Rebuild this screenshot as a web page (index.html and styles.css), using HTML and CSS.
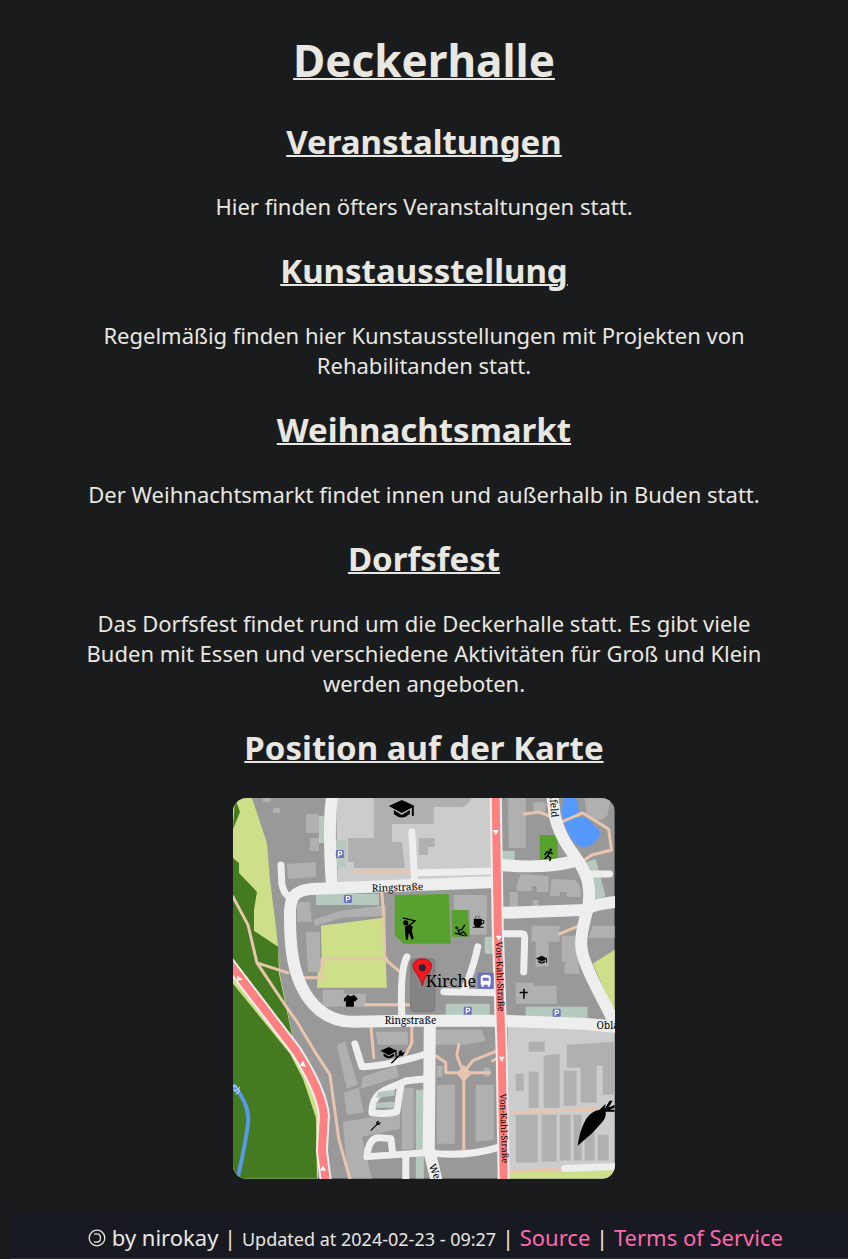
FILE: index.html
```html
<!DOCTYPE html>
<html lang="de">
<head>
<meta charset="utf-8">
<meta name="viewport" content="width=device-width, initial-scale=1">
<title>Deckerhalle</title>
<link rel="stylesheet" href="styles.css">
</head>
<body>
<main class="content">
<h1>Deckerhalle</h1>
<h2>Veranstaltungen</h2>
<p>Hier finden öfters Veranstaltungen statt.</p>
<h2>Kunstausstellung</h2>
<p>Regelmäßig finden hier Kunstausstellungen mit Projekten von Rehabilitanden statt.</p>
<h2>Weihnachtsmarkt</h2>
<p>Der Weihnachtsmarkt findet innen und außerhalb in Buden statt.</p>
<h2>Dorfsfest</h2>
<p>Das Dorfsfest findet rund um die Deckerhalle statt. Es gibt viele Buden mit Essen und verschiedene Aktivitäten für Groß und Klein werden angeboten.</p>
<h2>Position auf der Karte</h2>
<svg class="map" viewBox="233 798 382 381" role="img" aria-label="Karte">
<defs>
<g id="parking"><rect x="-4" y="-4" width="8" height="8" rx="1" fill="#6c70c4"/><path d="M-1.4 2.8V-2.4H.5a1.5 1.5 0 0 1 0 3H-1.4" fill="none" stroke="#fff" stroke-width="1.2"/></g>
<path id="cap" d="M-13-3 0-9 13-3 0 4ZM-8 1 0 6 8 1V5Q0 12-8 5ZM10-2H12V7H10Z"/>
<path id="wrench" d="M-6 6 2-2V-5L5-7V-4L8-5 6-1H3L-5 7Z"/>
<path id="down" d="M-3-2H3L0 3Z" fill="#fff"/>
</defs>
<rect x="233" y="798" width="382" height="381" fill="#999"/>
<path class="meadow" d="M233 798H252L267 843 270 880 276 927 278 947 280 975 293 1038 310 1075 320 1110 318 1179H233Z"/>
<path class="forest" d="M235 798 240 812 233 829ZM233 858 239 863V873L257 892 254 910V931L278 947 279 974 292 1035 290 1044 233 966ZM233 984 290 1054 303 1079 316 1118 317 1179H233Z"/>
<path class="light" d="M336 798H493V885L338 886ZM508 1026 615 1031V1179H509Z"/>
<path class="meadow" d="M321 926 384 918 386 962 387 988H317L318 970 322 967ZM593 964 615 950V1012ZM509 1173 615 1170V1179H509Z"/>
<path class="lot" d="M319 816H324V843H319ZM335 840H346V867H335ZM316 894H379V905H316ZM502 851H515V862H502ZM485 937H494V954H485ZM446 1004H490V1017H446ZM526 1007H588V1018H526ZM587 862 596 859 606 896 596 901ZM416 1090H424V1179H416Z"/>
<path class="park" d="M395 895 449 894 451 944H404L395 936ZM452 910H468L470 937H452ZM540 835H558V861H540Z"/>
<path class="building" d="M263 798H271V802H263ZM273 808H280V813H273ZM306 814H319V833H306ZM310 838H319V851H310ZM287 864 316 862V877L288 879ZM297 902H310L312 922H297ZM314 920 340 911 386 905V916L342 918 315 926ZM306 932H320V972H308ZM323 990H344V994H366V1007H323ZM374 798H472Q468 806 462 807H434V824H392V842H402L405 868H354V862H348V838H374ZM419 838H435V847H428V855H419ZM454 895H487V935H470V910H454ZM508 798H526V848H509ZM533 803Q541 800 547 804L545 812 534 811ZM585 798H611L608 815Q596 826 587 814ZM517 885 521 874 549 876V892H537V886H532V891H517ZM552 879 576 880 581 888V897H567V892H560V896H550ZM510 892H518V907H510ZM533 900H539V907H533ZM532 926H560V942H549V967H536V942H532ZM562 936H576L580 974H565V962H562ZM516 983H534V986H557V1004H516ZM376 1032H408V1045H378ZM435 1030H482L486 1041 466 1045H435ZM337 1046 345 1041 358 1085 347 1089ZM344 1093 359 1088 364 1113 347 1115ZM363 1077 396 1066 399 1077 361 1089ZM402 1088H414V1150H402ZM343 1122 400 1113V1129L362 1137 372 1179H348ZM437 1085 455 1085V1144H437ZM476 1085 494 1085V1140L476 1142ZM437 1066H443V1077H437ZM484 1068H490V1077H484ZM593 926H615V938H589ZM529 1042H545V1052H529ZM567 1045 615 1042V1095H603V1066H597V1103H581V1068H567ZM516 1074H524V1091H516ZM529 1072H539V1108H529ZM544 1056 560 1054V1108H544ZM564 1071H577V1106H564ZM516 1115H538V1163H516ZM542 1115H557V1162H542ZM560 1115H571V1161H560ZM574 1115H582V1161H574ZM585 1133H595V1161H585ZM598 1135H609V1161H598Z"/>
<path class="water" d="M564 798H576Q582 811 577 818L586 817 601 832Q596 848 581 847 570 841 566 827L562 812Z"/>
<g class="trail">
<path d="M233 897 248 925 257 963 288 973M302 978H322V959H387M257 963 285 1005 297 1022 315 1052 330 1075 339 1140 350 1179M382 893 384 918 385 959 400 972M354 871H413M366 1005H409M371 1026 374 1058M412 1027V1043L405 1057M525 814 539 812 550 816 562 822 583 813 609 829 612 850 592 855 582 862M560 934 579 926M510 1113 600 1109M508 1053 493 1061M436 1056 446 1063V1073H464L457 1056 459 1045M464 1073H490M464 1073 473 1061 498 1051M464 1073V1150M509 1172 565 1169"/>
</g>
<path d="M464 1065 472 1074 464 1082 457 1074Z" fill="#e9c5ae"/>
<g class="road">
<path class="wide" d="M332 798Q328 825 332 886M497 882 312 889C292 891 290 899 290 915C290 952 294 974 305 993C318 1014 334 1022 353 1022L410 1021 504 1021 584 1024 617 1027M553 798 555 815Q559 833 570 849C583 867 592 878 589 904C585 922 580 936 582 950C585 967 599 991 616 1025M502 865Q543 869 572 862M502 913 587 910Q592 905 617 902M430 1024 429 1149 437 1182"/>
<path d="M281 865 282 885Q284 893 288 896M412 832 415 883M415 873 492 871M591 874H610M504 934H522Q525 934 525 938L524 972M407 957Q400 970 402 1016M478 947Q475 963 465 989M444 992 494 993M355 1044 362 1067Q390 1066 430 1053M427 1079 407 1081C390 1089 372 1090 372 1113Q387 1115 397 1112L401 1085M367 1157Q369 1138 379 1138L391 1139 393 1155M367 1157 427 1153Q465 1158 498 1148M406 1157V1179M565 1169 615 1167"/>
</g>
<path class="lot" d="M379 1092 395 1090V1096L376 1098ZM376 1103 394 1102V1108H376Z"/>
<path d="M233 1085Q250 1105 248 1123 246 1142 238 1177" fill="none" stroke="#5998e8" stroke-width="4"/>
<path class="case" d="M229 963 296 1051Q322 1092 324 1116L322 1151 326 1182M496 796 498 927 502 1054 504 1182"/>
<path class="main" d="M229 963 296 1051Q322 1092 324 1116L322 1151 326 1182M496 796 498 927 502 1054 504 1182"/>
<rect x="411" y="959" width="24" height="53" rx="4" fill="#858585" stroke="#777"/>
<use href="#parking" x="340" y="854"/><use href="#parking" x="348" y="899"/><use href="#parking" x="468" y="1011"/><use href="#parking" x="557" y="1013"/>
<use href="#down" x="496" y="832"/><use href="#down" x="499" y="938"/><use href="#down" x="502" y="1059"/>
<path d="M237 981V976L243 980ZM300 1066 303 1061 306 1067ZM320 1171 323 1166 326 1171Z" fill="#fff"/>
<use href="#cap" x="402" y="809"/>
<use href="#cap" transform="translate(389 1053) scale(.65)"/><use href="#cap" transform="translate(542 960) scale(.44)"/>
<use href="#wrench" x="397" y="1057"/><use href="#wrench" transform="translate(375 1126) scale(.75)"/>
<path d="M344 999 348 995Q351 998 354 995L358 999 355 1002 354 1001V1007H346V1001L344 1002ZM523.500 989H525V992H528V993.500H525V999H523.500V993.500H520V992H523.500ZM474 919H482V925L480 927H476L474 925ZM473 927H484V928H473Z"/>
<path d="M481 920.500H484V923.500H481" fill="none" stroke="#000"/><path d="M476 918Q475 917 477 916M479 918Q478 917 480 916" fill="none" stroke="#000" stroke-width=".6"/>
<circle cx="406" cy="923" r="2.600"/><path d="M403 918 415 921 408 927" fill="none" stroke="#000" stroke-width="1.500"/><path d="M405 927 409 925 413 927 412 931 414 939 412 940 409 933 408 940H406Z"/>
<circle cx="551" cy="850" r="1.4"/><path d="M550 852 547 852 545 855M550 852 548 856 545 859M548 856 551 858 550 861M550 852 553 854" fill="none" stroke="#000" stroke-width="1.6"/>
<circle cx="457" cy="928" r="1.4"/><path d="M458 930 460 934 464 932 467 936M458 930 462 930 465 925M455 933 465 936" fill="none" stroke="#000" stroke-width="1.4"/>
<path d="M578 1146Q580 1131 586 1120 592 1111 600 1110L606 1104 605 1109 610 1101 613 1101 609 1108 615 1105V1108L610 1110H615V1112L606 1112Q607 1118 602 1123L593 1133Z"/>
<rect x="478" y="973" width="16" height="16" rx="1" fill="#6c70c4"/><path d="M481 978Q481 975 486 975T491 978V985H490V987H488V985H484V987H482V985H481ZM483 978V981H489V978Z" fill="#fff" fill-rule="evenodd"/>
<path d="M422.500 986Q421 979 417 974C409 965 415 959 422.500 959S436 965 428 974Q424 979 422.500 986Z" fill="#f51720" stroke="#a51820"/><circle cx="422.500" cy="968" r="3.500" fill="#202938"/>
<g class="label">
<text class="street" x="372" y="891" transform="rotate(-2 398 887)">Ringstraße</text><text class="street" x="385" y="1024">Ringstraße</text>
<text class="place" x="426" y="987">Kirche</text>
<text transform="translate(496 942) rotate(88)">Von-Kahl-Straße</text><text transform="translate(500 1094) rotate(88)">Von-Kahl-Straße</text>
<text class="street" x="597" y="1029">Obla</text><text class="street" transform="translate(550 793) rotate(86)">nfeld</text><text class="street" transform="translate(429 1166) rotate(68)">We</text>
<text transform="translate(231 1087) rotate(55)" fill="#dceaff">ch</text>
</g>
</svg>
</main>
<footer class="footer">
<svg class="copyleft" viewBox="0 0 18 18" role="img" aria-label="Copyleft"><circle cx="9" cy="9" r="7.800"/><path d="M6 5.200Q12.500 3.700 12.500 9T6 12.800"/></svg>
by nirokay | <small>Updated at 2024-02-23 - 09:27</small> | <a href="#source">Source</a> | <a href="#terms">Terms of Service</a>
</footer>
</body>
</html>
```
FILE: styles.css
```css
html {
  background: #1a1b1c;
}

body {
  display: flex;
  flex-direction: column;
  min-height: 100vh;
  margin: 0;
  color: #e9e7e1;
  font-family: "Noto Sans", sans-serif;
  font-size: 22px;
  line-height: 30px;
  text-align: center;
}

.content {
  width: 80%;
  margin: 0 auto;
}

h1,
h2 {
  text-decoration: underline 2px;
}

h1 {
  margin: 30px 0 29px;
  font-size: 44px;
  line-height: 60px;
}

h2 {
  margin: 27px 0;
  font-size: 33px;
  line-height: 45px;
}

p {
  margin: 27px 0;
}

.map {
  display: block;
  width: 45vw;
  margin: 28px auto 32px;
  border-radius: 14px;
}

.meadow { fill: #cddf88; }
.forest { fill: #447a20; }
.light { fill: #ccc; }
.lot { fill: #b5c9be; }
.park { fill: #59a12f; }
.building { fill: #b0b0b0; }
.water { fill: #59f; }

.trail,
.road,
.case,
.main {
  fill: none;
  stroke-linecap: round;
  stroke-linejoin: round;
}

.trail { stroke: #e9c5ae; stroke-width: 3; }
.road { stroke: #eee; stroke-width: 7; }
.wide { stroke-width: 12; }
.case { stroke: #eee; stroke-width: 12; }
.main { stroke: #ff8080; stroke-width: 8; }

.label {
  font-family: "Noto Serif", "DejaVu Serif", serif;
  font-size: 9px;
}

.street { font-size: 10px; }
.place { font-size: 16px; }

.footer {
  margin-top: auto;
  margin-left: 11px;
  padding: 11px 0 4px 12px;
  background: #181a21;
  border-bottom: 1px solid #30313a;
}

small { font-size: 18px; }

a {
  color: #ff69af;
  text-decoration: none;
}

.copyleft {
  width: 18px;
  height: 18px;
  vertical-align: -1px;
  fill: none;
  stroke: currentColor;
  stroke-width: 1.3;
}
```
